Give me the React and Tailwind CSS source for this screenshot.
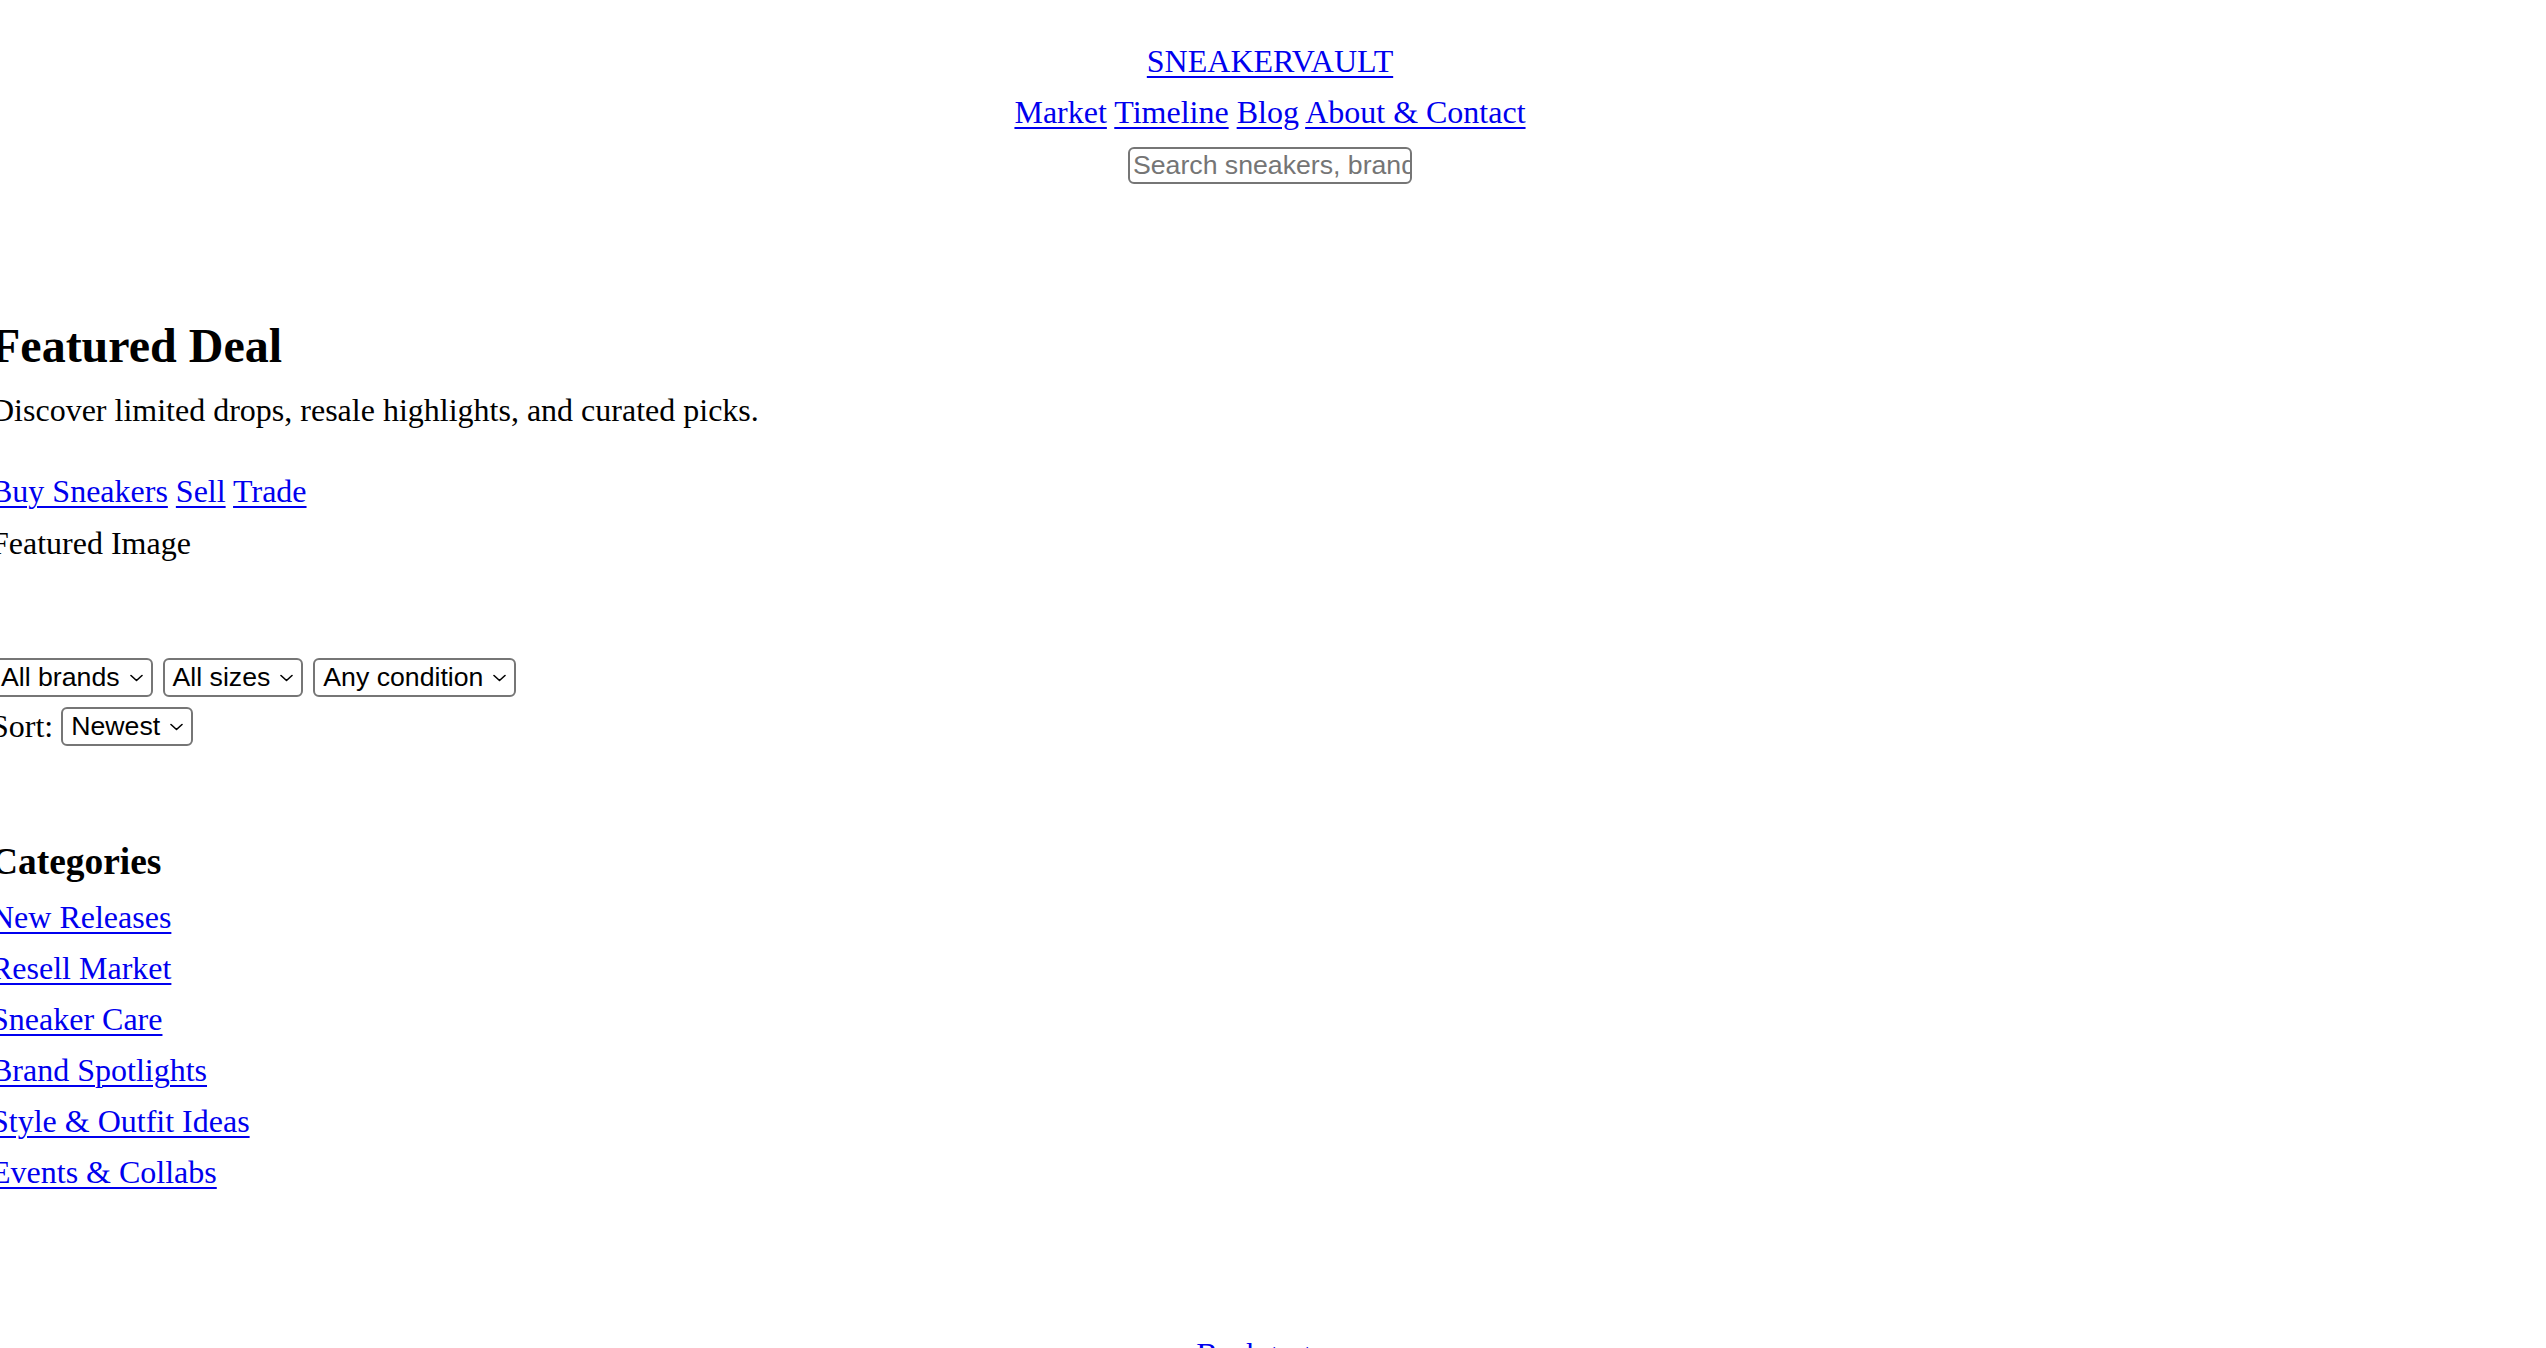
import React from "react";

function Chevron() {
  return (
    <svg width="13" height="8" viewBox="0 0 13 8" className="shrink-0">
      <polyline points="1,1.5 6.5,6.5 12,1.5" fill="none" stroke="#000" strokeWidth="1.6" strokeLinejoin="round" strokeLinecap="round" />
    </svg>
  );
}

function FakeSelect({ label, className = "" }) {
  return (
    <div
      className={`inline-flex h-[39px] items-center gap-[10px] rounded-[6px] border-2 border-[#767676] bg-white pl-[8px] pr-[8px] font-['Liberation_Sans',Arial,sans-serif] text-[26.67px] leading-none text-black ${className}`}
    >
      <span className="whitespace-nowrap">{label}</span>
      <Chevron />
    </div>
  );
}

const linkCls = "text-[#0000ee] underline decoration-[2px] underline-offset-[4px]";

export default function App() {
  return (
    <div className="relative h-[1348px] w-full overflow-hidden bg-white font-['Liberation_Serif','Times_New_Roman',serif] text-[32px] text-black">
      <header className="flex flex-col items-center pt-[36px] pr-[6px]">
        <div className="leading-[51px]">
          <a href="#" className={linkCls}>SNEAKERVAULT</a>
        </div>
        <nav className="leading-[51px] whitespace-nowrap">
          <a href="#" className={linkCls}>Market</a>{" "}
          <a href="#" className={linkCls}>Timeline</a>{" "}
          <a href="#" className={linkCls}>Blog</a>{" "}
          <a href="#" className={linkCls}>About &amp; Contact</a>
        </nav>
        <div className="mt-[9px] flex h-[37px] w-[284px] items-center overflow-hidden rounded-[6px] border-2 border-[#767676] pl-[3px]">
          <span className="whitespace-nowrap font-['Liberation_Sans',Arial,sans-serif] text-[26.67px] leading-none text-[#757575]">
            Search sneakers, brands, models…
          </span>
        </div>
      </header>

      <main className="ml-[-9px]">
        <section>
          <h2 className="mt-[134px] text-[48px] font-bold leading-[56px]">Featured Deal</h2>
          <p className="mt-[11px] leading-[51px]">Discover limited drops, resale highlights, and curated picks.</p>
          <div className="mt-[30px] leading-[51px] whitespace-nowrap">
            <a href="#" className={linkCls}>Buy Sneakers</a>{" "}
            <a href="#" className={linkCls}>Sell</a>{" "}
            <a href="#" className={linkCls}>Trade</a>
          </div>
          <div className="mt-[1px] leading-[51px]">Featured Image</div>
        </section>

        <section>
          <div className="mt-[89px] flex items-center gap-[10px]">
            <FakeSelect label="All brands" />
            <FakeSelect label="All sizes" />
            <FakeSelect label="Any condition" />
          </div>
          <div className="mt-[10px] flex h-[39px] items-center">
            <span className="leading-[39px]">Sort:</span>
            <FakeSelect label="Newest" className="ml-[8px]" />
          </div>
        </section>

        <section>
          <h3 className="mt-[94px] text-[37.44px] font-bold leading-[44px]">Categories</h3>
          <ul className="mt-[8px] flex flex-col">
            {[
              "New Releases",
              "Resell Market",
              "Sneaker Care",
              "Brand Spotlights",
              "Style & Outfit Ideas",
              "Events & Collabs",
            ].map((c) => (
              <li key={c} className="leading-[51px]">
                <a href="#" className={linkCls}>{c}</a>
              </li>
            ))}
          </ul>
        </section>
      </main>

      <footer className="mt-[131px] pr-[6px] text-center leading-[51px]">
        <a href="#" className={linkCls}>Back to top</a>
      </footer>
    </div>
  );
}
